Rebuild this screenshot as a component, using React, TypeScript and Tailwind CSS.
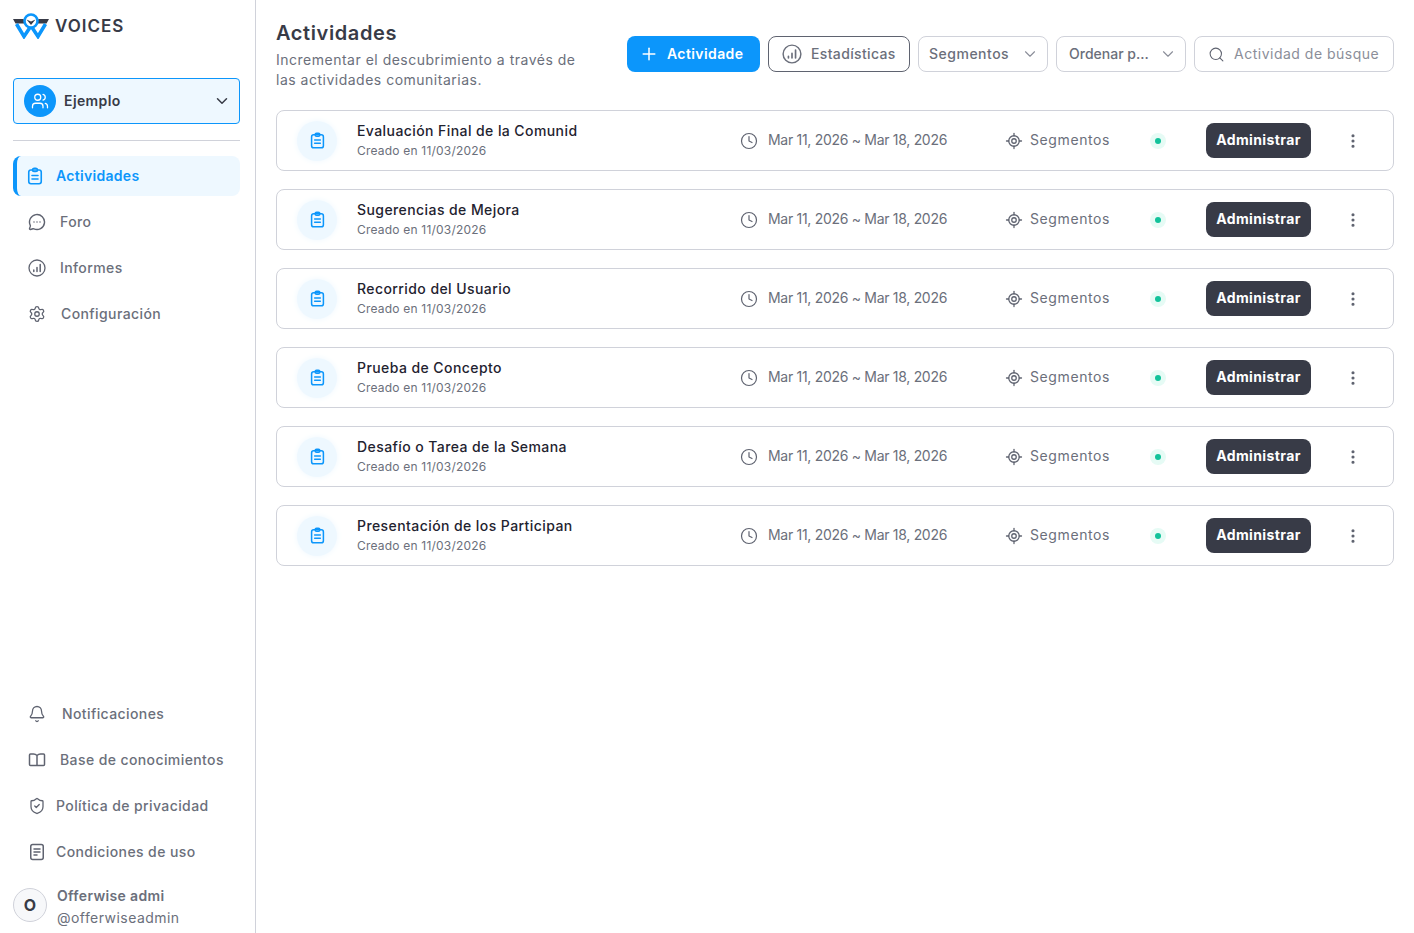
import { Bell, ChevronDown, Clock, MessageCircleMore, MoreVertical, Plus, Search, Settings, ShieldCheck, Users, LocateFixed } from 'lucide-react'
import type { ReactNode } from 'react'

const activities = [
    'Evaluación Final de la Comunid',
    'Sugerencias de Mejora',
    'Recorrido del Usuario',
    'Prueba de Concepto',
    'Desafío o Tarea de la Semana',
    'Presentación de los Participan',
]

function ChartCircle({ className }: { className: string }) {
    return (
        <svg viewBox="0 0 18 18" fill="none" stroke="currentColor" strokeWidth="1.3" strokeLinecap="round" className={className}>
            <circle cx="9" cy="9" r="8" />
            <path d="M5.8 12.5v-1.5M9 12.5V8.5M12.2 12.5V5.5" strokeWidth="1.5" />
        </svg>
    )
}

function BookIcon({ className }: { className: string }) {
    return (
        <svg viewBox="0 0 18 18" fill="none" stroke="currentColor" strokeWidth="1.5" strokeLinejoin="round" className={className}>
            <path d="M9 4.500C8 3.500 7 3 5.500 3H2.500C1.900 3 1.500 3.400 1.500 4v9.500c0 .6.400 1 1 1h4c1 0 2.500 0 2.500 0s1.500 0 2.500 0h4c.6 0 1-.4 1-1V4c0-.6-.4-1-1-1h-3C11 3 10 3.500 9 4.500zM9 4.500v10" />
        </svg>
    )
}

function TermsIcon({ className }: { className: string }) {
    return (
        <svg viewBox="0 0 18 18" fill="none" stroke="currentColor" strokeWidth="1.5" strokeLinecap="round" className={className}>
            <rect x="2.750" y="1.500" width="12.500" height="15" rx="2" />
            <path d="M6 6h6M6 9h6M6 12h3" />
        </svg>
    )
}

function ClipIcon({ className }: { className: string }) {
    return (
        <svg viewBox="0 0 18 18" fill="none" stroke="currentColor" strokeWidth="1.600" strokeLinecap="round" strokeLinejoin="round" className={className}>
            <rect x="2.750" y="3" width="12.500" height="13.750" rx="2.200" />
            <path d="M6.500 3c0-1 .6-1.750 1.500-1.750h2c.9 0 1.500.75 1.500 1.750s-.6 1.500-1.500 1.500H8c-.9 0-1.500-.5-1.500-1.500z" />
            <path d="M6 8.500h6M6 12h6" />
        </svg>
    )
}

function Logo() {
    return (
        <svg viewBox="0 0 36 26" className="w-9 h-[26px]">
            <path d="M0 6h10.500l2.500 4.500H2.500zM36 6H25.500L23 10.500h10.500z" fill="#383b47" />
            <path d="M3.500 11l7.500 12.500L18 13l7 10.500L32.500 11" fill="none" stroke="#0c96fb" strokeWidth="3.500" />
            <circle cx="18" cy="8" r="6.500" fill="#fff" stroke="#0c96fb" strokeWidth="2.600" />
            <path d="M13.500 6.500l4.500 2 4.500-2-4.500 5.500z" fill="#383b47" />
        </svg>
    )
}

function NavItem({ icon, label, gap }: { icon: ReactNode; label: string; gap: string }) {
    return (
        <div className={`flex items-center h-10 pl-[15px] text-[14px] font-medium tracking-[0.4px] text-[#6b6f7b] ${gap}`}>
            <span className="text-[#5f6370]">{icon}</span>
            <span className="pb-[2px]">{label}</span>
        </div>
    )
}

function ActivityRow({ title }: { title: string }) {
    return (
        <article className="flex items-center h-[61px] border border-[#d0d2da] rounded-lg pl-5">
            <div className="w-10 h-10 rounded-full bg-[#eef8ff] shadow-[0_0_6px_#eef8ff] flex items-center justify-center shrink-0">
                <ClipIcon className="w-[17px] h-[17px] text-[#0c96fb]" />
            </div>
            <div className="w-[383px] ml-5 shrink-0">
                <div className="mb-[1px] text-[14px] leading-5 font-medium tracking-[0.42px] text-[#1f2330]">{title}</div>
                <div className="pb-[1px] text-[12px] leading-[18px] tracking-[0.2px] text-[#6b6f7b]">Creado en 11/03/2026</div>
            </div>
            <Clock className="w-[18px] h-[18px] text-[#5f6370] shrink-0" strokeWidth={1.6} />
            <span className="ml-[10px] pb-[2px] w-[237px] shrink-0 text-[14px] tracking-[-0.3px] text-[#6b6f7b]">Mar 11, 2026 ~ Mar 18, 2026</span>
            <LocateFixed className="w-[18px] h-[18px] text-[#5f6370] shrink-0" strokeWidth={1.7} />
            <span className="ml-[7px] pb-[2px] w-[120px] shrink-0 text-[14px] tracking-[0.6px] text-[#6b6f7b]">Segmentos</span>
            <div className="w-4 h-4 rounded-full bg-[#e6fbf5] flex items-center justify-center shrink-0">
                <div className="w-[6px] h-[6px] rounded-full bg-[#12c29a]" />
            </div>
            <button className="ml-10 pb-[2px] w-[105px] h-[35px] rounded-lg bg-[#383b47] text-white text-[14px] font-bold tracking-[0.4px] shrink-0">Administrar</button>
            <MoreVertical className="ml-[33px] w-[18px] h-[18px] text-[#5f6370]" strokeWidth={2.200} />
        </article>
    )
}

export default function App() {
    return (
        <div className="flex h-[933px] w-[1414px] overflow-hidden bg-white font-['Inter',sans-serif]">
            <aside className="w-[256px] shrink-0 h-full border-r border-[#d0d2da] flex flex-col pl-[13px] pr-[15px]">
                <div className="flex items-center gap-[6px] h-[26px] mt-[13px]">
                    <Logo />
                    <span className="pt-[2px] text-[17px] font-semibold tracking-[1px] text-[#383b47]">VOICES</span>
                </div>
                <div className="mt-[39px] h-[46px] flex items-center rounded border border-[#0c96fb] bg-[#eef8ff] pl-[10px] pr-2">
                    <div className="w-8 h-8 rounded-full bg-[#0c96fb] flex items-center justify-center">
                        <Users className="w-[18px] h-[18px] text-white" strokeWidth={1.700} />
                    </div>
                    <span className="ml-2 pb-[2px] flex-1 text-[14px] font-semibold tracking-[0.4px] text-[#383b47]">Ejemplo</span>
                    <ChevronDown className="w-[18px] h-[18px] text-[#383b47]" strokeWidth={2} />
                </div>
                <div className="mt-4 border-t border-[#d0d2da]" />
                <div className="mt-[15px] h-10 flex items-center rounded-lg border-l-4 border-[#0c96fb] bg-[#eef8ff] pl-[9px] gap-3 text-[14px] font-semibold tracking-[0.3px] text-[#0c96fb]">
                    <ClipIcon className="w-[18px] h-[18px]" />
                    <span className="pb-[2px]">Actividades</span>
                </div>
                <div className="mt-[6px] flex flex-col gap-[6px]">
                    <NavItem icon={<MessageCircleMore className="w-[18px] h-[18px]" strokeWidth={1.900} />} label="Foro" gap="gap-[14px]" />
                    <NavItem icon={<ChartCircle className="w-[18px] h-[18px]" />} label="Informes" gap="gap-[14px]" />
                    <NavItem icon={<Settings className="w-[18px] h-[18px]" strokeWidth={1.700} />} label="Configuración" gap="gap-[15px]" />
                </div>
                <div className="mt-auto flex flex-col gap-[6px]">
                    <NavItem icon={<Bell className="w-[18px] h-[18px]" strokeWidth={1.700} />} label="Notificaciones" gap="gap-[16px]" />
                    <NavItem icon={<BookIcon className="w-[18px] h-[18px]" />} label="Base de conocimientos" gap="gap-[14px]" />
                    <NavItem icon={<ShieldCheck className="w-[18px] h-[18px]" strokeWidth={1.700} />} label="Política de privacidad" gap="gap-[10px]" />
                    <NavItem icon={<TermsIcon className="w-[18px] h-[18px]" />} label="Condiciones de uso" gap="gap-[10px]" />
                </div>
                <div className="mt-[13px] mb-[4px] flex items-start gap-[10px]">
                    <div className="mt-[3px] w-[34px] h-[34px] rounded-full border border-[#d0d2da] bg-[#f7f8fa] flex items-center justify-center text-[16px] font-bold text-[#383b47]">O</div>
                    <div>
                        <div className="text-[14px] leading-[22px] font-semibold tracking-[0.35px] text-[#6b6f7b]">Offerwise admi</div>
                        <div className="text-[14px] leading-[22px] tracking-[0.45px] text-[#6b6f7b]">@offerwiseadmin</div>
                    </div>
                </div>
            </aside>
            <main className="flex-1 pl-5 pr-5">
                <header className="flex h-[110px] pt-[20px]">
                    <div className="w-[351px] shrink-0">
                        <h1 className="text-[20px] leading-[26px] font-semibold tracking-[0.6px] text-[#383b47]">Actividades</h1>
                        <p className="mt-1 w-[310px] text-[14px] leading-5 tracking-[0.5px] text-[#6b6f7b]">Incrementar el descubrimiento a través de las actividades comunitarias.</p>
                    </div>
                    <div className="flex gap-2 mt-4 h-9">
                        <button className="w-[133px] pl-3 rounded-lg bg-[#0c96fb] text-white text-[14px] font-semibold tracking-[0.4px] flex items-center gap-[8px]">
                            <Plus className="w-[20px] h-[20px]" strokeWidth={1.800} />
                            <span className="pb-[2px]">Actividade</span>
                        </button>
                        <button className="w-[142px] pl-[13px] rounded-lg border border-[#5f6370] text-[14px] font-medium tracking-[0.35px] text-[#6b6f7b] flex items-center gap-[9px]">
                            <ChartCircle className="w-[20px] h-[20px]" />
                            <span className="pb-[2px]">Estadísticas</span>
                        </button>
                        <div className="w-[130px] rounded-lg border border-[#d0d2da] pl-[10px] pr-[8px] flex items-center justify-between text-[14px] font-medium tracking-[0.5px] text-[#6b6f7b]">
                            <span className="pb-[2px]">Segmentos</span>
                            <ChevronDown className="w-[18px] h-[18px] text-[#8b8e99]" strokeWidth={1.500} />
                        </div>
                        <div className="w-[130px] rounded-lg border border-[#d0d2da] pl-3 pr-[8px] flex items-center justify-between text-[14px] font-medium text-[#6b6f7b]">
                            <span className="pb-[2px]">Ordenar p...</span>
                            <ChevronDown className="w-[18px] h-[18px] text-[#8b8e99]" strokeWidth={1.500} />
                        </div>
                        <div className="w-[200px] rounded-lg border border-[#d0d2da] pl-[13px] flex items-center gap-[9px] text-[14px] tracking-[0.5px] text-[#8b8e99]">
                            <Search className="w-[17px] h-[17px] text-[#5f6370]" strokeWidth={1.500} />
                            <span className="pb-[2px]">Actividad de búsque</span>
                        </div>
                    </div>
                </header>
                <div className="flex flex-col gap-[18px]">
                    {activities.map((title) => (
                        <ActivityRow key={title} title={title} />
                    ))}
                </div>
            </main>
        </div>
    )
}
